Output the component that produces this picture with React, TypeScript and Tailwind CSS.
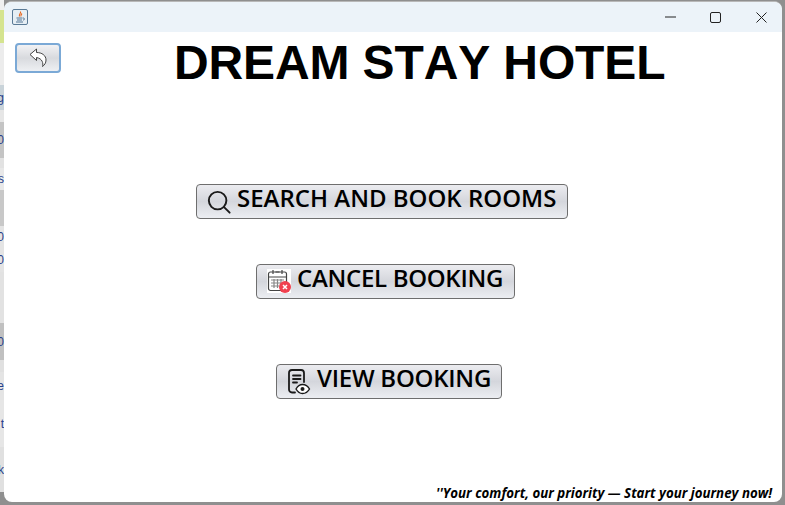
import React from 'react';

const stripRows = [
  { h: 10, bg: 'bg-[#f0f0f0]', text: '' },
  { h: 33, bg: 'bg-[#d5e48f]', text: '' },
  { h: 42, bg: 'bg-[#ececec]', text: '' },
  { h: 25, bg: 'bg-[#c9d3d9]', text: 'g' },
  { h: 12, bg: 'bg-[#e6e6e6]', text: '' },
  { h: 36, bg: 'bg-[#c4c4c4]', text: '0' },
  { h: 10, bg: 'bg-[#e2e2e2]', text: '' },
  { h: 22, bg: 'bg-[#e8e8e8]', text: 's' },
  { h: 36, bg: 'bg-[#c8c8c8]', text: '' },
  { h: 22, bg: 'bg-[#e4e4e4]', text: '0' },
  { h: 24, bg: 'bg-[#e4e4e4]', text: '0' },
  { h: 51, bg: 'bg-[#e2e2e2]', text: '' },
  { h: 37, bg: 'bg-[#c0c0c0]', text: '0' },
  { h: 12, bg: 'bg-[#e0e0e0]', text: '' },
  { h: 28, bg: 'bg-[#e4e4e4]', text: 'e' },
  { h: 47, bg: 'bg-[#e6e6e6]', text: 't' },
  { h: 45, bg: 'bg-[#e0e0e0]', text: 'k' },
  { h: 13, bg: 'bg-[#8f8f8f]', text: '' },
];

const SearchIcon = () => (
  <svg width="24" height="24" viewBox="0 0 26 26" fill="none" stroke="#1a1a1a" strokeWidth="2.1" className="mt-[1px]">
    <circle cx="11.5" cy="11.5" r="9.5" />
    <path d="M18.5 18.5 L24.5 24.5" strokeLinecap="round" />
  </svg>
);

const CalendarIcon = () => (
  <svg width="25" height="24" viewBox="0 0 25 24" fill="none">
    <rect x="0" y="0" width="24" height="24" fill="#fff" />
    <rect x="1.5" y="3" width="18" height="18.5" rx="2" stroke="#444" strokeWidth="1.2" fill="#fff" />
    <path d="M1.5 8 H19.5 M6 1 V5 M15 1 V5 M8.5 3 H12.5" stroke="#444" strokeWidth="1.2" />
    <path d="M4 11 H17 M4 14 H14 M4 17 H12 M7 10 V19 M10.5 10 V19 M14 10 V15" stroke="#888" strokeWidth="1.2" />
    <circle cx="18" cy="18" r="6" fill="#f0414f" />
    <path d="M16 16 L20 20 M20 16 L16 20" stroke="#fff" strokeWidth="1.5" />
  </svg>
);

const ViewIcon = () => (
  <svg width="24" height="26" viewBox="0 0 24 26" fill="none" stroke="#1a1a1a">
    <path d="M8 23.5 H5 a3 3 0 0 1 -3 -3 V4 a3 3 0 0 1 3 -3 H14 a3 3 0 0 1 3 3 V13" strokeWidth="1.8" strokeLinecap="round" />
    <path d="M6 6.5 H13.5 M6 10 H13.5 M6 13.5 H10" strokeWidth="1.8" strokeLinecap="round" />
    <path d="M9 20 C11 16.5 13.5 15.5 15.5 15.5 C17.5 15.5 20.5 16.5 22.5 20 C20.5 23.5 17.5 24.5 15.5 24.5 C13.5 24.5 11 23.5 9 20 Z" strokeWidth="1.4" fill="#fff" />
    <circle cx="15.5" cy="20" r="2" fill="#1a1a1a" stroke="none" />
  </svg>
);

const BackIcon = () => (
  <svg width="18" height="20" viewBox="0 0 18 20" fill="#fff" stroke="#444" strokeWidth="1" strokeLinejoin="round">
    <path d="M1 6.5 L7.5 1 V4.5 C13 4.5 17 7.5 17 12 C17 15 15.5 17 13.5 18.5 C14.5 15.5 13.5 10.5 7.5 9.5 V12.5 Z" />
  </svg>
);

const JavaIcon = () => (
  <div className="w-4 h-4 rounded-[2px] border border-[#5a7a96] bg-[#e6eef4] flex items-center justify-center">
    <svg width="12" height="12" viewBox="0 0 12 12" fill="none">
      <path d="M6.5 0.5 C7.5 2 4.5 3 5.5 5.5 M8 2.5 C7 3.5 6.5 4 7 5.5" stroke="#e8641b" strokeWidth="1.1" />
      <path d="M2.5 7 H8.5 M3 9 H8 M2 11 H9 M9 7 C11 7 11 9 9 9" stroke="#44688a" strokeWidth="0.9" />
    </svg>
  </div>
);

const MenuButton = ({
  label,
  icon,
  className,
  labelClass,
}: {
  label: string;
  icon: React.ReactNode;
  className: string;
  labelClass: string;
}) => (
  <button
    className={`h-[35px] flex items-center pl-[10px] rounded-[4px] border border-[#6e6e6e] bg-gradient-to-b from-[#ececf0] via-[#d4d6dc] to-[#eceef2] ${className}`}
  >
    <span className="w-[30px] h-[26px] mt-[1px] flex shrink-0 items-start">{icon}</span>
    <span className={`text-[24px] leading-[26px] font-semibold text-black mb-[8px] whitespace-nowrap font-['Open_Sans',sans-serif] ${labelClass}`}>
      {label}
    </span>
  </button>
);

export default function App() {
  return (
    <div className="w-[785px] h-[505px] overflow-hidden flex bg-[#8f8f8f]">
      {/* what shows of the desktop behind the window */}
      <div className="w-[4px] flex flex-col shrink-0 overflow-hidden font-['Liberation_Sans',sans-serif]">
        {stripRows.map((row, i) => (
          <div
            key={i}
            style={{ height: row.h }}
            className={`${row.bg} shrink-0 text-[12px] text-[#27408b] leading-none flex items-center justify-end`}
          >
            {row.text}
          </div>
        ))}
      </div>

      <div className="w-[778px] h-[501px] mt-[1px] rounded-t-[8px] rounded-b-[8px] overflow-hidden bg-white flex flex-col border-t border-[#b8b8b8]">
        <div className="h-[30px] shrink-0 bg-[#ecf3f9] flex items-center pl-[8px]">
          <JavaIcon />
          <div className="flex-1" />
          <svg width="11" height="2" viewBox="0 0 11 2" className="mr-[34px]">
            <path d="M0 1 H11" stroke="#222" strokeWidth="1" />
          </svg>
          <svg width="11" height="11" viewBox="0 0 11 11" fill="none" className="mr-[35px]">
            <rect x="0.5" y="0.5" width="10" height="10" rx="1.5" stroke="#222" />
          </svg>
          <svg width="11" height="11" viewBox="0 0 11 11" fill="none" className="mr-[15px]">
            <path d="M0.5 0.5 L10.5 10.5 M10.5 0.5 L0.5 10.5" stroke="#222" />
          </svg>
        </div>

        <div className="flex-1 flex flex-col font-['Liberation_Sans',sans-serif]">
          <div className="h-[60px] flex">
            <button className="w-[46px] h-[30px] mt-[11px] ml-[11px] rounded-[4px] border-2 border-[#7ba9d6] bg-gradient-to-b from-[#f2f2f4] via-[#d8dade] to-[#eef0f3] flex items-center justify-center">
              <BackIcon />
            </button>
            <h1 className="ml-[113px] mt-[5px] text-[48px] leading-[52px] font-bold text-black whitespace-nowrap [font-kerning:none] tracking-[-0.12px]">
              DREAM STAY HOTEL
            </h1>
          </div>

          <MenuButton label="SEARCH AND BOOK ROOMS" icon={<SearchIcon />} labelClass="tracking-[0px]" className="w-[372px] ml-[192px] mt-[92px]" />
          <MenuButton label="CANCEL BOOKING" icon={<CalendarIcon />} labelClass="tracking-[-0.3px]" className="w-[259px] ml-[252px] mt-[45px]" />
          <MenuButton label="VIEW BOOKING" icon={<ViewIcon />} labelClass="tracking-[-0.25px]" className="w-[226px] ml-[272px] mt-[65px]" />

          <p className="mt-auto mb-[1px] mr-[10px] text-right text-[13.3px] leading-[16px] font-bold italic text-black font-['Open_Sans',sans-serif]">
            ''Your comfort, our priority — Start your journey now!
          </p>
        </div>
      </div>
    </div>
  );
}
